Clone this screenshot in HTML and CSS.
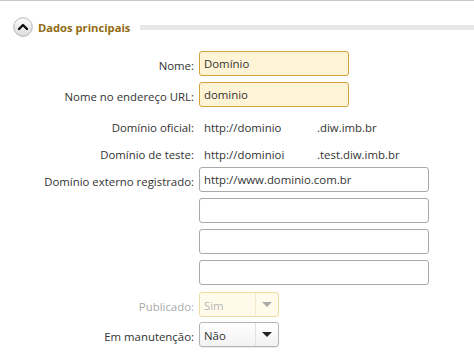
FILE: index.html
```html
<!DOCTYPE html>
<html lang="pt-BR">
<head>
    <meta charset="UTF-8">
    <title>Dados principais</title>
    <link rel="stylesheet" href="styles.css">
</head>
<body>

<div class="panel">
    <div class="section-header">
        <span class="toggle-icon">
            <svg width="20" height="20" viewBox="0 0 20 20">
                <defs>
                    <linearGradient id="circ" x1="0" y1="0" x2="0" y2="1">
                        <stop offset="0" stop-color="#fdfdfd"/>
                        <stop offset="1" stop-color="#dcdcdc"/>
                    </linearGradient>
                </defs>
                <circle cx="10" cy="10" r="9.3" fill="url(#circ)" stroke="#b4b4b4" stroke-width="1"/>
                <path d="M6 12 L10 8 L14 12" fill="none" stroke="#111" stroke-width="2.4" stroke-linecap="round" stroke-linejoin="round"/>
            </svg>
        </span>
        <span class="section-title">Dados principais</span>
        <span class="section-line"></span>
    </div>

    <div class="form">
        <div class="row">
            <label class="field-label">Nome:</label>
            <input class="text-input required short" type="text" value="Domínio">
        </div>
        <div class="row">
            <label class="field-label">Nome no endereço URL:</label>
            <input class="text-input required short" type="text" value="dominio">
        </div>
        <div class="row info-row">
            <label class="field-label">Domínio oficial:</label>
            <span class="info-value">http://dominio</span><span class="info-suffix">.diw.imb.br</span>
        </div>
        <div class="row info-row">
            <label class="field-label">Domínio de teste:</label>
            <span class="info-value">http://dominioi</span><span class="info-suffix">.test.diw.imb.br</span>
        </div>
        <div class="row">
            <label class="field-label">Domínio externo registrado:</label>
            <input class="text-input long" type="text" value="http://www.dominio.com.br">
        </div>
        <div class="row">
            <label class="field-label"></label>
            <input class="text-input long" type="text">
        </div>
        <div class="row">
            <label class="field-label"></label>
            <input class="text-input long" type="text">
        </div>
        <div class="row">
            <label class="field-label"></label>
            <input class="text-input long" type="text">
        </div>
        <div class="row select-row">
            <label class="field-label disabled">Publicado:</label>
            <div class="select disabled">
                <span class="select-text">Sim</span>
                <span class="select-arrow"></span>
            </div>
        </div>
        <div class="row">
            <label class="field-label">Em manutenção:</label>
            <div class="select">
                <span class="select-text">Não</span>
                <span class="select-arrow"></span>
            </div>
        </div>
    </div>
</div>

</body>
</html>
```

FILE: styles.css
```css
body {
    margin: 0;
    padding: 0;
    font-family: 'Open Sans', 'Noto Sans', sans-serif;
    font-size: 11.4px;
    color: #333;
    background-color: #fff;
}
.panel {
    border-top: 1px solid #c8c8c8;
    width: 474px;
    height: 362px;
}
.section-header {
    display: flex;
    align-items: center;
    height: 20px;
    margin-top: 16px;
    padding-left: 13px;
}
.toggle-icon {
    width: 20px;
    height: 20px;
    display: block;
}
.toggle-icon svg {
    display: block;
}
.section-title {
    margin-left: 5px;
    font-weight: bold;
    font-size: 11.2px;
    color: #8f6c12;
    white-space: nowrap;
}
.section-line {
    flex: 1;
    height: 5px;
    margin-left: 10px;
    background-color: #e8e8e8;
}
.form {
    margin-top: 14px;
}
.row {
    display: flex;
    align-items: center;
    height: 25px;
    margin-bottom: 6px;
}
.field-label {
    width: 199px;
    flex: none;
    text-align: right;
    padding-right: 5px;
    box-sizing: border-box;
    white-space: nowrap;
    padding-top: 3px;
}
.field-label.disabled {
    color: #aaa;
}
.text-input {
    box-sizing: border-box;
    height: 25px;
    padding: 0 4px;
    font-family: inherit;
    font-size: 11.4px;
    color: #333;
    border: 1px solid #a9a9a9;
    border-radius: 3px;
    background-color: #fff;
    outline: none;
}
.text-input.required {
    background-color: #fff4d6;
    border-color: #d3a33a;
}
.short {
    width: 150px;
}
.long {
    width: 230px;
}
.info-row {
    margin-bottom: 2px;
}
.info-value {
    display: inline-block;
    width: 113px;
    padding-left: 5px;
    padding-top: 3px;
    white-space: nowrap;
}
.info-suffix {
    padding-top: 3px;
    white-space: nowrap;
}
.select-row {
    margin-top: 7px;
    margin-bottom: 5px;
}
.select {
    box-sizing: border-box;
    width: 80px;
    height: 25px;
    display: flex;
    align-items: center;
    border: 1px solid #b4b4b4;
    border-radius: 3px;
    background: linear-gradient(#ffffff, #f2f2f2);
    box-shadow: 0 1px 1px rgba(0, 0, 0, 0.08);
}
.select-text {
    flex: 1;
    padding-left: 4px;
    padding-top: 1px;
}
.select-arrow {
    width: 22px;
    height: 23px;
    border-left: 1px solid #e2e2e2;
    position: relative;
}
.select-arrow::after {
    content: "";
    position: absolute;
    left: 6px;
    top: 9px;
    border-left: 5px solid transparent;
    border-right: 5px solid transparent;
    border-top: 5px solid #222;
}
.select.disabled {
    background: #fffaea;
    border-color: #efdca2;
    box-shadow: none;
    color: #b8b8b8;
}
.select.disabled .select-arrow {
    border-left-color: #f3ead0;
}
.select.disabled .select-arrow::after {
    border-top-color: #aaa;
}
```
